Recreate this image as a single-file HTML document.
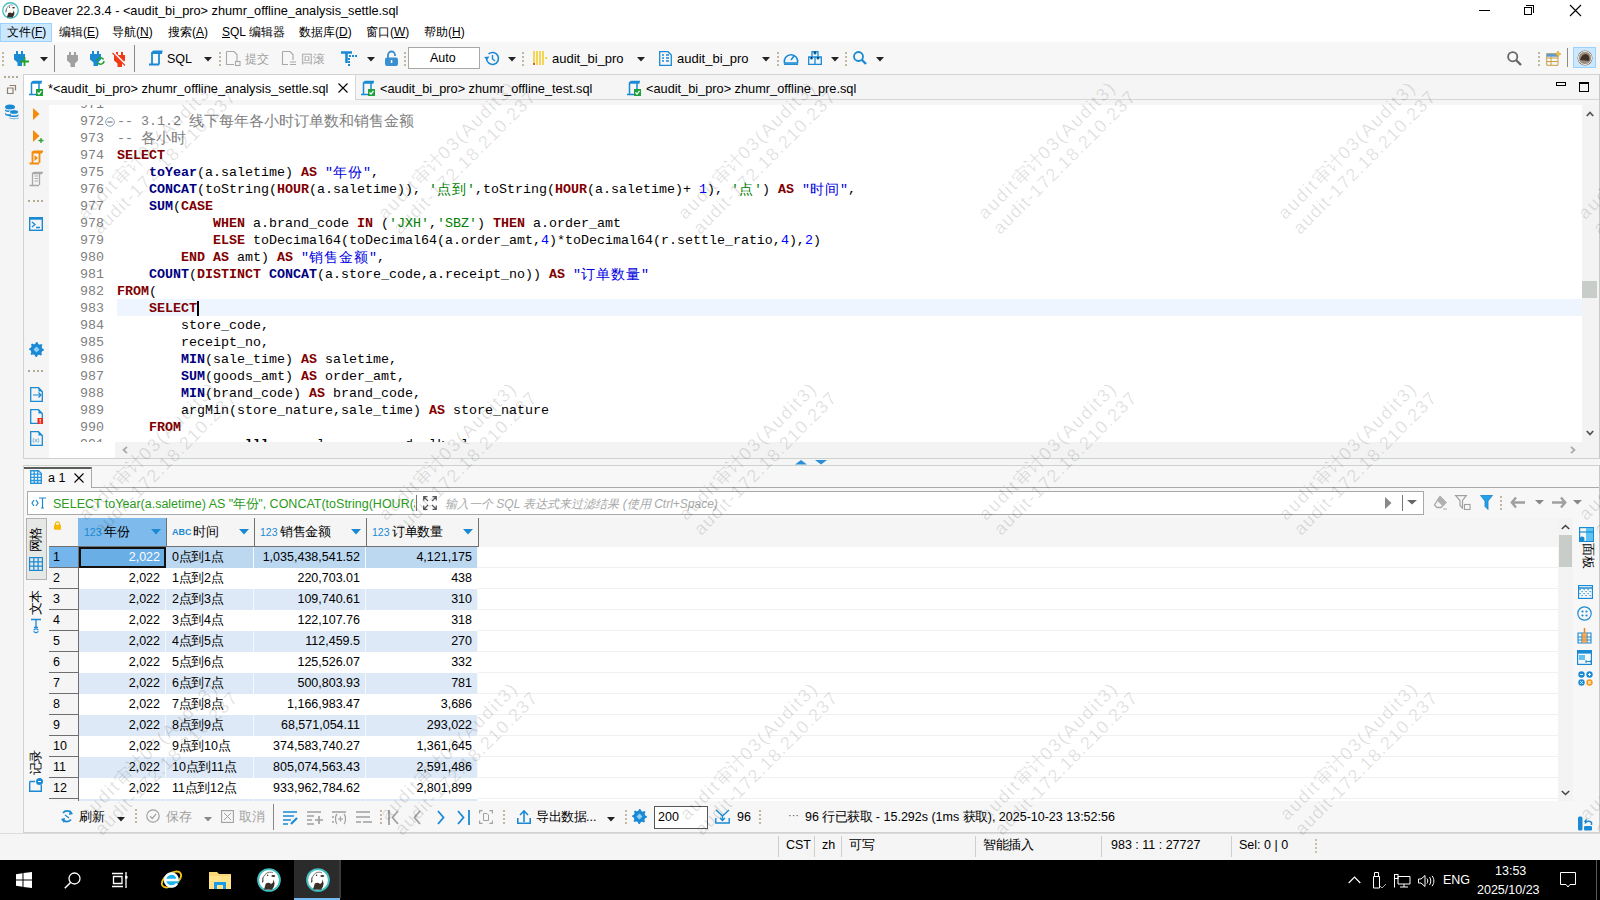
<!DOCTYPE html>
<html><head><meta charset="utf-8"><style>
*{margin:0;padding:0;box-sizing:border-box}
html,body{width:1600px;height:900px;overflow:hidden;background:#f5f5f5;font-family:"Liberation Sans",sans-serif;font-size:12px;color:#000}
.a{position:absolute}
.t{position:absolute;white-space:pre;line-height:1}
svg{position:absolute;overflow:visible}
.code{position:absolute;left:0;font-family:"Liberation Mono",monospace;font-size:13.333px;line-height:17px;white-space:pre}
.kw{color:#7f0000;font-weight:bold}
.fn{color:#00007f;font-weight:bold}
.st{color:#008000}
.id{color:#0000e0}
.nu{color:#0000ff}
.cm{color:#808080}
.ln{color:#808080}
.cj{display:inline-block;width:15px;font-family:"Liberation Sans",sans-serif;font-size:14px;font-weight:normal;text-align:left;line-height:17px;vertical-align:top}
.cm .cj{width:15px;font-size:14.5px}
.dots{position:absolute;width:2px;border-left:2px dotted #c8bfa8}
.sep{position:absolute;width:1px;background:#a6a6a6}
.dd{position:absolute;width:0;height:0;border-left:4px solid transparent;border-right:4px solid transparent;border-top:4px solid #1e1e1e}
.cw{display:inline-block;width:1em;text-align:center}
</style></head><body>

<div class="a" style="left:0;top:0;width:1600px;height:23px;background:#fff"></div>
<svg style="left:2px;top:2px" width="17" height="17" viewBox="0 0 24 24"><circle cx="12" cy="12" r="10.9" fill="#fff" stroke="#42bfc1" stroke-width="1.9"/><path d="M7 21.5L8.8 15.5Q12 13.8 14 16L15.8 14.8L16.6 11.5L17.6 15.5L17 18.5L15 21.8Z" fill="#3a2e28"/><ellipse cx="16.3" cy="8" rx="2" ry="1.1" fill="#3a2e28"/><circle cx="10.6" cy="7.3" r="0.8" fill="#3a2e28"/><path d="M5.5 11.5Q7.5 5 12 4.2Q14.5 4 16 4.8" stroke="#666" stroke-width="0.9" fill="none"/><path d="M6 8.5L4.8 15L6.5 13.5Z" fill="#3a2e28"/></svg>
<div class="t" style="left:23px;top:5px;font-size:12.75px">DBeaver 22.3.4 - &lt;audit_bi_pro&gt; zhumr_offline_analysis_settle.sql</div>
<div class="a" style="left:1479px;top:10px;width:11px;height:1px;background:#000"></div>
<div class="a" style="left:1526px;top:5px;width:8px;height:8px;border:1px solid #000;border-left:none;border-bottom:none"></div>
<div class="a" style="left:1524px;top:7px;width:8px;height:8px;border:1px solid #000;background:#fff"></div>
<svg style="left:1569px;top:4px" width="13" height="13"><path d="M1 1L12 12M12 1L1 12" stroke="#000" stroke-width="1.1"/></svg>

<div class="a" style="left:0;top:23px;width:1600px;height:19px;background:#fff"></div>
<div class="a" style="left:0;top:23px;width:52px;height:19px;background:#cce8ff;border:1px solid #99d1ff"></div>
<div class="t" style="left:7px;top:26px"><span class="cw">文</span><span class="cw">件</span>(<u>F</u>)</div><div class="t" style="left:59px;top:26px"><span class="cw">编</span><span class="cw">辑</span>(<u>E</u>)</div><div class="t" style="left:112px;top:26px"><span class="cw">导</span><span class="cw">航</span>(<u>N</u>)</div><div class="t" style="left:168px;top:26px"><span class="cw">搜</span><span class="cw">索</span>(<u>A</u>)</div><div class="t" style="left:222px;top:26px"><u>S</u>QL <span class="cw">编</span><span class="cw">辑</span><span class="cw">器</span></div><div class="t" style="left:299px;top:26px"><span class="cw">数</span><span class="cw">据</span><span class="cw">库</span>(<u>D</u>)</div><div class="t" style="left:366px;top:26px"><span class="cw">窗</span><span class="cw">口</span>(<u>W</u>)</div><div class="t" style="left:424px;top:26px"><span class="cw">帮</span><span class="cw">助</span>(<u>H</u>)</div>
<div class="a" style="left:0;top:42px;width:1600px;height:32px;background:#f7f7f7"></div>
<div class="a" style="left:2px;top:52px;width:2px;height:2px;background:#c2b89f"></div><div class="a" style="left:2px;top:56px;width:2px;height:2px;background:#c2b89f"></div><div class="a" style="left:2px;top:60px;width:2px;height:2px;background:#c2b89f"></div><div class="a" style="left:2px;top:64px;width:2px;height:2px;background:#c2b89f"></div>
<svg style="left:14px;top:51px" width="12" height="15"><path d="M2 0H4V3H7V0H9V3H11V8.5L8 11.5V15H3.5V11.5L0 8.5V3H2Z" fill="#1a8ad4"/></svg>
<svg style="left:20px;top:57px" width="9" height="9"><path d="M4.5 0V9M0 4.5H9" stroke="#1fa030" stroke-width="1.8"/></svg>
<svg style="left:40px;top:57px" width="8" height="5"><path d="M0 0H8L4 4.5Z" fill="#222"/></svg>
<div class="sep" style="left:54px;top:45px;height:27px;background:#8a8a8a"></div>
<svg style="left:67px;top:52px" width="12" height="15"><path d="M2 0H4V3H7V0H9V3H11V8.5L8 11.5V15H3.5V11.5L0 8.5V3H2Z" fill="#a0a0a0"/></svg>
<svg style="left:90px;top:51px" width="12" height="15"><path d="M2 0H4V3H7V0H9V3H11V8.5L8 11.5V15H3.5V11.5L0 8.5V3H2Z" fill="#1a8ad4"/></svg>
<svg style="left:96px;top:57px" width="9" height="8"><path d="M1 4A3.5 3.5 0 0 1 7.5 2.5M8 4A3.5 3.5 0 0 1 1.5 5.5" stroke="#1fa030" stroke-width="1.5" fill="none"/></svg>
<svg style="left:114px;top:52px" width="12" height="15"><path d="M2 0H4V3H7V0H9V3H11V8.5L8 11.5V15H3.5V11.5L0 8.5V3H2Z" fill="#f03a17"/></svg>
<svg style="left:112px;top:51px" width="15" height="15"><path d="M1 1L14 14" stroke="#f7f7f7" stroke-width="2.2"/><path d="M0.5 2L13 14.5" stroke="#f03a17" stroke-width="1.1"/></svg>
<div class="sep" style="left:134px;top:45px;height:27px;background:#8a8a8a"></div>
<svg style="left:148px;top:51px" width="15" height="15"><path d="M4 13V2H14M4 2C5 1 5 0.5 6 0.5H14.5M1 13.5H11M11 13.5V2" stroke="#1a8ad4" stroke-width="1.8" fill="none"/></svg>
<div class="t" style="left:167px;top:53px;font-size:12.5px">SQL</div>
<svg style="left:204px;top:57px" width="8" height="5"><path d="M0 0H8L4 4.5Z" fill="#222"/></svg>
<div class="a" style="left:219px;top:52px;width:2px;height:2px;background:#c2b89f"></div><div class="a" style="left:219px;top:56px;width:2px;height:2px;background:#c2b89f"></div><div class="a" style="left:219px;top:60px;width:2px;height:2px;background:#c2b89f"></div><div class="a" style="left:219px;top:64px;width:2px;height:2px;background:#c2b89f"></div>
<svg style="left:226px;top:51px" width="15" height="15"><path d="M0.5 0.5H8L11 3.5V10M0.5 0.5V13.5H8" stroke="#a8a8a8" stroke-width="1.1" fill="none"/><rect x="9.5" y="10.5" width="4.5" height="4" fill="none" stroke="#a8a8a8" stroke-width="1.1"/></svg>
<div class="t" style="left:245px;top:53px;color:#a0a0a0"><span class="cw">提</span><span class="cw">交</span></div>
<svg style="left:282px;top:51px" width="15" height="15"><path d="M0.5 0.5H8L11 3.5V9M0.5 0.5V13.5H6M8 11H14M8 13.5H14" stroke="#a8a8a8" stroke-width="1.1" fill="none"/></svg>
<div class="t" style="left:301px;top:53px;color:#a0a0a0"><span class="cw">回</span><span class="cw">滚</span></div>
<svg style="left:341px;top:51px" width="16" height="16"><path d="M0 1.5H11M5.5 1.5V12" stroke="#1a8ad4" stroke-width="2.6"/><rect x="8" y="4" width="2" height="2" fill="#1a8ad4"/><rect x="11" y="4" width="2" height="2" fill="#1a8ad4"/><rect x="14" y="4" width="2" height="2" fill="#1a8ad4"/><rect x="7" y="7" width="2" height="2" fill="#1a8ad4"/><rect x="7" y="10" width="2" height="2" fill="#1a8ad4"/><rect x="7" y="13" width="2" height="2" fill="#1a8ad4"/></svg>
<svg style="left:367px;top:57px" width="8" height="5"><path d="M0 0H8L4 4.5Z" fill="#222"/></svg>
<svg style="left:385px;top:51px" width="13" height="15"><path d="M3 7V4A3.5 3.5 0 0 1 10 4V5" stroke="#3a8fd0" stroke-width="1.8" fill="none"/><rect x="0" y="6.5" width="13" height="8.5" rx="2" fill="#3a8fd0"/><rect x="5.8" y="9" width="1.5" height="3" fill="#fff"/></svg>
<div class="a" style="left:404px;top:52px;width:2px;height:2px;background:#c2b89f"></div><div class="a" style="left:404px;top:56px;width:2px;height:2px;background:#c2b89f"></div><div class="a" style="left:404px;top:60px;width:2px;height:2px;background:#c2b89f"></div><div class="a" style="left:404px;top:64px;width:2px;height:2px;background:#c2b89f"></div>
<div class="a" style="left:408px;top:47px;width:72px;height:22px;background:#fff;border:1px solid #a8a8a8"></div>
<div class="t" style="left:430px;top:52px;font-size:12.5px">Auto</div>
<svg style="left:484px;top:51px" width="16" height="15"><path d="M2.5 7.5A6 6 0 1 0 4.5 3" stroke="#1a8ad4" stroke-width="1.6" fill="none"/><path d="M0 6L3 9L5.5 5.5Z" fill="#1a8ad4"/><path d="M8.5 4V8L11 10" stroke="#1a8ad4" stroke-width="1.4" fill="none"/></svg>
<svg style="left:508px;top:57px" width="8" height="5"><path d="M0 0H8L4 4.5Z" fill="#222"/></svg>
<div class="a" style="left:522px;top:52px;width:2px;height:2px;background:#c2b89f"></div><div class="a" style="left:522px;top:56px;width:2px;height:2px;background:#c2b89f"></div><div class="a" style="left:522px;top:60px;width:2px;height:2px;background:#c2b89f"></div><div class="a" style="left:522px;top:64px;width:2px;height:2px;background:#c2b89f"></div>
<svg style="left:533px;top:51px" width="15" height="15"><path d="M1 0V14M4 0V14M7 0V14M10 0V14" stroke="#f4c400" stroke-width="1.3"/><rect x="0.3" y="12" width="1.5" height="2" fill="#e03030"/><rect x="12.5" y="6" width="1.5" height="2" fill="#f4c400"/></svg>
<div class="t" style="left:552px;top:52px;font-size:13px">audit_bi_pro</div>
<svg style="left:637px;top:57px" width="8" height="5"><path d="M0 0H8L4 4.5Z" fill="#222"/></svg>
<svg style="left:659px;top:51px" width="13" height="15"><path d="M0.7 0.7H9L12.3 4V14.3H0.7Z" stroke="#1a8ad4" stroke-width="1.3" fill="none"/><path d="M3 4H5M3 7H5M3 10H5M7 4H10M7 7H10M7 10H10" stroke="#1a8ad4" stroke-width="1.5"/></svg>
<div class="t" style="left:677px;top:52px;font-size:13px">audit_bi_pro</div>
<svg style="left:762px;top:57px" width="8" height="5"><path d="M0 0H8L4 4.5Z" fill="#222"/></svg>
<div class="a" style="left:777px;top:52px;width:2px;height:2px;background:#c2b89f"></div><div class="a" style="left:777px;top:56px;width:2px;height:2px;background:#c2b89f"></div><div class="a" style="left:777px;top:60px;width:2px;height:2px;background:#c2b89f"></div><div class="a" style="left:777px;top:64px;width:2px;height:2px;background:#c2b89f"></div>
<svg style="left:783px;top:51px" width="16" height="14"><path d="M1.5 12A6.7 6.7 0 1 1 14.5 12Z" stroke="#1a8ad4" stroke-width="1.6" fill="none"/><path d="M1 13.3H15" stroke="#1a8ad4" stroke-width="1.3"/><path d="M8 9L11 5" stroke="#1a8ad4" stroke-width="1.6"/></svg>
<svg style="left:808px;top:51px" width="14" height="14"><path d="M4 0.7H10V6H4ZM0.7 6H7V13.3H0.7ZM7 6H13.3V13.3H7Z" stroke="#1a8ad4" stroke-width="1.3" fill="none"/><path d="M6 0.7V3H8V0.7M2.5 6V8H4.5V6M9 6V8H11V6" stroke="#1a8ad4" stroke-width="1"/></svg>
<svg style="left:831px;top:57px" width="8" height="5"><path d="M0 0H8L4 4.5Z" fill="#222"/></svg>
<div class="a" style="left:845px;top:52px;width:2px;height:2px;background:#c2b89f"></div><div class="a" style="left:845px;top:56px;width:2px;height:2px;background:#c2b89f"></div><div class="a" style="left:845px;top:60px;width:2px;height:2px;background:#c2b89f"></div><div class="a" style="left:845px;top:64px;width:2px;height:2px;background:#c2b89f"></div>
<svg style="left:853px;top:51px" width="14" height="14"><circle cx="5.5" cy="5.5" r="4.5" stroke="#1a8ad4" stroke-width="1.8" fill="none"/><path d="M8.5 8.5L13 13" stroke="#1a8ad4" stroke-width="2.4"/></svg>
<svg style="left:876px;top:57px" width="8" height="5"><path d="M0 0H8L4 4.5Z" fill="#222"/></svg>
<svg style="left:1507px;top:51px" width="15" height="15"><circle cx="5.7" cy="5.7" r="4.6" stroke="#666" stroke-width="1.8" fill="none"/><path d="M9 9L14 14" stroke="#666" stroke-width="2.4"/></svg>
<div class="a" style="left:1538px;top:52px;width:2px;height:2px;background:#c2b89f"></div><div class="a" style="left:1538px;top:56px;width:2px;height:2px;background:#c2b89f"></div><div class="a" style="left:1538px;top:60px;width:2px;height:2px;background:#c2b89f"></div><div class="a" style="left:1538px;top:64px;width:2px;height:2px;background:#c2b89f"></div>
<svg style="left:1546px;top:51px" width="16" height="15"><path d="M0.7 2.7H12V14.3H0.7ZM0.7 7H12M0.7 10.5H12M5 2.7V14.3" stroke="#c9a040" stroke-width="1" fill="none"/><rect x="0.7" y="2.7" width="11" height="3" fill="#5b9bd5"/><path d="M12 0L13 2L15 3L13 4L12 6L11 4L9 3L11 2Z" fill="#f0c040" stroke="#d09020" stroke-width="0.5"/></svg>
<div class="sep" style="left:1567px;top:48px;height:19px;background:#8a8a8a"></div>
<div class="a" style="left:1573px;top:47px;width:23px;height:21px;background:#cce8ff;border:1px solid #99d1ff"></div>
<svg style="left:1577px;top:50px" width="16" height="16"><circle cx="8" cy="8" r="7.5" fill="#7a6a5a"/><circle cx="8" cy="8" r="6.5" fill="#9a8a7a" stroke="#eee" stroke-width="1"/><path d="M3 10C4 6 6 4 9 4C12 5 13 8 12 11Z" fill="#3d3129"/></svg>

<!-- left trim -->
<div class="a" style="left:4px;top:76px;width:14px;height:2px;border-top:2px dotted #b5ab95"></div>
<svg style="left:7px;top:85px" width="9" height="9"><path d="M2.5 0.5H8.5V5.5M0.5 3H6V8.5H0.5Z" stroke="#8a7f70" stroke-width="1.2" fill="none"/></svg>
<svg style="left:4px;top:104px" width="15" height="15"><ellipse cx="6" cy="3" rx="5" ry="2.5" fill="#1a8ad4"/><path d="M1 5C1 7 11 7 11 5V6.5C11 8.5 1 8.5 1 6.5ZM1 8.5C1 10.5 6 10.5 7 10V12C6 12.5 1 12 1 10Z" fill="#1a8ad4"/><ellipse cx="10" cy="8" rx="4.5" ry="2.3" fill="#1a8ad4" stroke="#fff" stroke-width="0.8"/><path d="M5.5 10C5.5 12 14.5 12 14.5 10V11.5C14.5 13.5 5.5 13.5 5.5 11.5ZM5.5 13C5.5 15 14.5 15 14.5 13V14C14.5 15.5 5.5 15.5 5.5 14Z" fill="#1a8ad4"/></svg>
<!-- panel -->
<div class="a" style="left:23px;top:74px;width:1577px;height:385px;background:#f5f5f5;border:1px solid #d2d2d2;border-right:1px solid #c8c8c8"></div>
<div class="a" style="left:24px;top:75px;width:1575px;height:25px;background:#f5f5f5;border-bottom:1px solid #d6d6d6"></div>
<div class="a" style="left:24px;top:75px;width:332px;height:25px;background:#fff;border-right:1px solid #d6d6d6"></div>
<svg style="left:29px;top:81px" width="16" height="16"><path d="M2.5 13V2H12.5M2.5 2C3.5 1 3.5 0.5 4.5 0.5H13M0 13.5H8M10 1V8" stroke="#1a8ad4" stroke-width="1.5" fill="none"/><rect x="7" y="8" width="7" height="7" fill="#1ea03c"/><path d="M8.5 11.5L10 13L12.5 9.8" stroke="#fff" stroke-width="1.2" fill="none"/></svg>
<div class="t" style="left:48px;top:83px;font-size:12.75px">*&lt;audit_bi_pro&gt; zhumr_offline_analysis_settle.sql</div>
<svg style="left:338px;top:83px" width="10" height="10"><path d="M0.5 0.5L9.5 9.5M9.5 0.5L0.5 9.5" stroke="#000" stroke-width="1.1"/></svg>
<svg style="left:361px;top:81px" width="16" height="16"><path d="M2.5 13V2H12.5M2.5 2C3.5 1 3.5 0.5 4.5 0.5H13M0 13.5H8M10 1V8" stroke="#1a8ad4" stroke-width="1.5" fill="none"/><rect x="7" y="8" width="7" height="7" fill="#1ea03c"/><path d="M8.5 11.5L10 13L12.5 9.8" stroke="#fff" stroke-width="1.2" fill="none"/></svg>
<div class="t" style="left:380px;top:83px;font-size:12.75px">&lt;audit_bi_pro&gt; zhumr_offline_test.sql</div>
<svg style="left:627px;top:81px" width="16" height="16"><path d="M2.5 13V2H12.5M2.5 2C3.5 1 3.5 0.5 4.5 0.5H13M0 13.5H8M10 1V8" stroke="#1a8ad4" stroke-width="1.5" fill="none"/><rect x="7" y="8" width="7" height="7" fill="#1ea03c"/><path d="M8.5 11.5L10 13L12.5 9.8" stroke="#fff" stroke-width="1.2" fill="none"/></svg>
<div class="t" style="left:646px;top:83px;font-size:12.75px">&lt;audit_bi_pro&gt; zhumr_offline_pre.sql</div>
<div class="a" style="left:1556px;top:82px;width:10px;height:4px;border:1.5px solid #000"></div>
<div class="a" style="left:1579px;top:82px;width:10px;height:10px;border:1.5px solid #000;border-top:2.5px solid #000"></div>
<!-- ruler icons -->
<svg style="left:33px;top:108px" width="7" height="12"><path d="M0 0L6.5 6L0 12Z" fill="#f58a0b"/></svg>
<svg style="left:33px;top:130px" width="11" height="13"><path d="M0 0L6.5 6L0 12Z" fill="#f58a0b"/><path d="M8 8V13M5.5 10.5H10.5" stroke="#2a9d3a" stroke-width="1.3"/></svg>
<svg style="left:29px;top:151px" width="15" height="14"><path d="M3.5 12V1.5H13M3.5 1.5C4.5 0.5 4.5 0.5 5.5 0.5H14M0.5 12.5H10M10.5 1V12" stroke="#f58a0b" stroke-width="1.8" fill="none"/><path d="M5.5 4L9 7L5.5 10Z" fill="#f58a0b"/></svg>
<svg style="left:29px;top:172px" width="15" height="15"><path d="M3.5 13V1.5H13M3.5 1.5C4.5 0.5 4.5 0.5 5.5 0.5H14M0.5 13.5H10M10.5 1V13" stroke="#a8a8a8" stroke-width="1.3" fill="none"/><path d="M5.5 4H9M5.5 6.5H9M5.5 9H9" stroke="#a8a8a8" stroke-width="1"/></svg>
<div class="a" style="left:28px;top:200px;width:15px;height:2px;border-top:2px dotted #b5ab95"></div>
<svg style="left:29px;top:217px" width="14" height="14"><rect x="0.7" y="0.7" width="12.6" height="12.6" fill="none" stroke="#1a8ad4" stroke-width="1.4"/><rect x="0.7" y="0.7" width="12.6" height="2" fill="#1a8ad4"/><path d="M3 5L6 7.5L3 10M7 10.5H11" stroke="#1a8ad4" stroke-width="1.3" fill="none"/></svg>
<svg style="left:29px;top:342px" width="15" height="15"><path d="M7.14 0.11L8.59 0.18L9.39 2.23L10.38 2.70L12.47 2.02L13.44 3.09L12.56 5.11L12.93 6.14L14.89 7.14L14.82 8.59L12.77 9.39L12.30 10.38L12.98 12.47L11.91 13.44L9.89 12.56L8.86 12.93L7.86 14.89L6.41 14.82L5.61 12.77L4.62 12.30L2.53 12.98L1.56 11.91L2.44 9.89L2.07 8.86L0.11 7.86L0.18 6.41L2.23 5.61L2.70 4.62L2.02 2.53L3.09 1.56L5.11 2.44L6.14 2.07Z" fill="#1a8ad4"/><circle cx="7.5" cy="7.5" r="5.6" fill="#1a8ad4"/><path d="M7.5 4.5L10.5 7.5L7.5 10.5L4.5 7.5Z" fill="#8fd0f5"/></svg>
<div class="a" style="left:28px;top:370px;width:15px;height:2px;border-top:2px dotted #b5ab95"></div>
<svg style="left:30px;top:387px" width="13" height="15"><path d="M0.7 0.7H8.5L12.3 4.5V14.3H0.7Z" stroke="#1a8ad4" stroke-width="1.3" fill="none"/><path d="M8.5 0.7V4.5H12.3" fill="#1a8ad4"/><path d="M3 8H11M8.5 5.5L11 8L8.5 10.5" stroke="#1a8ad4" stroke-width="1.2" fill="none"/></svg>
<svg style="left:30px;top:409px" width="13" height="15"><path d="M0.7 0.7H8.5L12.3 4.5V14.3H0.7Z" stroke="#1a8ad4" stroke-width="1.3" fill="none"/><path d="M8.5 0.7V4.5H12.3" fill="#1a8ad4"/><rect x="7.5" y="9" width="5.5" height="6" fill="#f02a1a"/><path d="M10.2 10V12.5M10.2 13.3V14.2" stroke="#fff" stroke-width="1.1"/></svg>
<svg style="left:30px;top:431px" width="13" height="15"><path d="M0.7 0.7H8.5L12.3 4.5V14.3H0.7Z" stroke="#1a8ad4" stroke-width="1.3" fill="none"/><path d="M8.5 0.7V4.5H12.3" fill="#1a8ad4"/><text x="2.3" y="11" font-size="6" fill="#1a8ad4" font-family="Liberation Sans">(x)</text></svg>
<!-- text area -->
<div class="a" style="left:49px;top:105px;width:1533px;height:337px;background:#fff;overflow:hidden">
  <div class="a" style="left:68px;top:194px;width:1465px;height:17px;background:#eef5fe"></div>
  <div class="a" style="left:148px;top:196px;width:2px;height:15px;background:#000"></div>
  <div class="code ln" style="left:31px;top:-9px">971
972
973
974
975
976
977
978
979
980
981
982
983
984
985
986
987
988
989
990
991</div><div class="code" style="left:68px;top:-9px">
<span class="cm">-- 3.1.2 <span class="cj">线</span><span class="cj">下</span><span class="cj">每</span><span class="cj">年</span><span class="cj">各</span><span class="cj">小</span><span class="cj">时</span><span class="cj">订</span><span class="cj">单</span><span class="cj">数</span><span class="cj">和</span><span class="cj">销</span><span class="cj">售</span><span class="cj">金</span><span class="cj">额</span></span>
<span class="cm">-- <span class="cj">各</span><span class="cj">小</span><span class="cj">时</span></span>
<span class="kw">SELECT</span>
    <span class="fn">toYear</span>(a.saletime) <span class="kw">AS</span> <span class="id">"<span class="cj">年</span><span class="cj">份</span>"</span>,
    <span class="fn">CONCAT</span>(toString(<span class="kw">HOUR</span>(a.saletime)), <span class="st">'<span class="cj">点</span><span class="cj">到</span>'</span>,toString(<span class="kw">HOUR</span>(a.saletime)+ <span class="nu">1</span>), <span class="st">'<span class="cj">点</span>'</span>) <span class="kw">AS</span> <span class="id">"<span class="cj">时</span><span class="cj">间</span>"</span>,
    <span class="fn">SUM</span>(<span class="kw">CASE</span>
            <span class="kw">WHEN</span> a.brand_code <span class="kw">IN</span> (<span class="st">'JXH'</span>,<span class="st">'SBZ'</span>) <span class="kw">THEN</span> a.order_amt
            <span class="kw">ELSE</span> toDecimal64(toDecimal64(a.order_amt,<span class="nu">4</span>)*toDecimal64(r.settle_ratio,<span class="nu">4</span>),<span class="nu">2</span>)
        <span class="kw">END</span> <span class="kw">AS</span> amt) <span class="kw">AS</span> <span class="id">"<span class="cj">销</span><span class="cj">售</span><span class="cj">金</span><span class="cj">额</span>"</span>,
    <span class="fn">COUNT</span>(<span class="kw">DISTINCT</span> <span class="fn">CONCAT</span>(a.store_code,a.receipt_no)) <span class="kw">AS</span> <span class="id">"<span class="cj">订</span><span class="cj">单</span><span class="cj">数</span><span class="cj">量</span>"</span>
<span class="kw">FROM</span>(
    <span class="kw">SELECT</span>
        store_code,
        receipt_no,
        <span class="fn">MIN</span>(sale_time) <span class="kw">AS</span> saletime,
        <span class="fn">SUM</span>(goods_amt) <span class="kw">AS</span> order_amt,
        <span class="fn">MIN</span>(brand_code) <span class="kw">AS</span> brand_code,
        argMin(store_nature,sale_time) <span class="kw">AS</span> store_nature
    <span class="kw">FROM</span>
                <b>lll</b>      l          d  lk  l</div>
  <svg style="left:56px;top:12px" width="10" height="10"><circle cx="5" cy="5" r="4.3" fill="#fff" stroke="#8aa0b8" stroke-width="1"/><path d="M2.5 5H7.5" stroke="#6a7f98" stroke-width="1.2"/></svg>
</div>
<!-- vscroll -->
<div class="a" style="left:1582px;top:105px;width:17px;height:353px;background:#f3f3f3"></div>
<div class="a" style="left:1582px;top:281px;width:15px;height:17px;background:#c9cdc9"></div>
<svg style="left:1586px;top:111px" width="8" height="6"><path d="M0.8 5L4 1.5L7.2 5" stroke="#555" stroke-width="1.8" fill="none"/></svg>
<svg style="left:1586px;top:430px" width="8" height="6"><path d="M0.8 1L4 4.5L7.2 1" stroke="#555" stroke-width="1.8" fill="none"/></svg>
<div class="a" style="left:49px;top:442px;width:66px;height:16px;background:#fff"></div>
<!-- hscroll -->
<div class="a" style="left:115px;top:442px;width:1467px;height:16px;background:#f3f3f3"></div>
<svg style="left:122px;top:446px" width="6" height="8"><path d="M5 0.8L1.5 4L5 7.2" stroke="#aaa" stroke-width="1.8" fill="none"/></svg>
<svg style="left:1570px;top:446px" width="6" height="8"><path d="M1 0.8L4.5 4L1 7.2" stroke="#aaa" stroke-width="1.8" fill="none"/></svg>
<div class="a" style="left:23px;top:458px;width:1577px;height:1px;background:#cdd2cd"></div>

<!-- splitter -->
<div class="a" style="left:23px;top:465px;width:1577px;height:1px;background:#cdd2cd"></div>
<svg style="left:795px;top:460px" width="12" height="5"><path d="M0 4.5H12L6 0Z" fill="#2a8fd8"/></svg>
<svg style="left:815px;top:460px" width="12" height="5"><path d="M0 0H12L6 4.5Z" fill="#2a8fd8"/></svg>
<div class="a" style="left:23px;top:466px;width:1577px;height:367px;background:#f7f7f7;border-left:1px solid #d2d2d2;border-right:1px solid #c8c8c8;border-bottom:1px solid #d2d2d2"></div>
<!-- tab -->
<div class="a" style="left:24px;top:487px;width:1575px;height:1px;background:#a9a9a9"></div>
<div class="a" style="left:24px;top:467px;width:68px;height:21px;background:#f7f7f7;border-right:1px solid #a9a9a9;border-top:2px solid #5a5d5a"></div>
<svg style="left:30px;top:470px" width="12" height="14"><path d="M0.7 0.7H8.5L11.3 3.5V13.3H0.7Z" fill="#fff" stroke="#2a96dc" stroke-width="1.4"/><path d="M0.7 4.2H11.3M0.7 7.4H11.3M0.7 10.5H11.3M4.2 0.7V13.3M7.6 0.7V13.3" stroke="#2a96dc" stroke-width="1.3"/></svg>
<div class="t" style="left:48px;top:472px;font-size:12.5px">a 1</div>
<svg style="left:74px;top:473px" width="10" height="10"><path d="M0.5 0.5L9.5 9.5M9.5 0.5L0.5 9.5" stroke="#000" stroke-width="1.1"/></svg>
<!-- filter -->
<div class="a" style="left:27px;top:491px;width:1397px;height:24px;background:#fff;border:1px solid #a9a9a9"></div>
<svg style="left:31px;top:497px" width="16" height="12"><path d="M3 3L1 6L3 9M5 3L7 6L5 9" stroke="#1a8ad4" stroke-width="1.2" fill="none"/><path d="M8 1H15M11.5 1V11M10 11H13" stroke="#1a8ad4" stroke-width="1.2" fill="none"/></svg>
<div class="t" style="left:53px;top:498px;font-size:12.5px;color:#2c9a1c;width:362px;overflow:hidden">SELECT toYear(a.saletime) AS "<span class="cw">年</span><span class="cw">份</span>", CONCAT(toString(HOUR(a.saletime)), '<span class="cw">点</span><span class="cw">到</span>'</div>
<div class="a" style="left:416px;top:495px;width:1px;height:16px;background:#777"></div>
<svg style="left:423px;top:496px" width="14" height="14"><path d="M0.7 4.5V0.7H4.5M9.5 0.7H13.3V4.5M13.3 9.5V13.3H9.5M4.5 13.3H0.7V9.5M1 1L5 5M13 1L9 5M13 13L9 9M1 13L5 9" stroke="#555" stroke-width="1.2" fill="none"/></svg>
<div class="t" style="left:445px;top:498px;font-size:12px;color:#a8a8a8;font-style:italic"><span class="cw">输</span><span class="cw">入</span><span class="cw">一</span><span class="cw">个</span> SQL <span class="cw">表</span><span class="cw">达</span><span class="cw">式</span><span class="cw">来</span><span class="cw">过</span><span class="cw">滤</span><span class="cw">结</span><span class="cw">果</span> (<span class="cw">使</span><span class="cw">用</span> Ctrl+Space)</div>
<svg style="left:1385px;top:497px" width="7" height="12"><path d="M0 0L6.5 6L0 12Z" fill="#888"/></svg>
<div class="a" style="left:1402px;top:495px;width:1px;height:16px;background:#777"></div>
<svg style="left:1407px;top:500px" width="10" height="5"><path d="M0 0H10L5.0 4.5Z" fill="#666"/></svg>
<svg style="left:1433px;top:495px" width="15" height="15"><path d="M7 1.5L13 7.5L8 12.5H4L1.5 10Z" stroke="#a8a8a8" stroke-width="1.3" fill="none"/><path d="M7 1.5L13 7.5L9.5 11L3.5 5Z" fill="#b0b0b0"/><path d="M10 14H14" stroke="#a8a8a8" stroke-width="1"/></svg>
<svg style="left:1455px;top:495px" width="16" height="15"><path d="M0.7 0.7H11.3L7.5 5.5V13L5 10.5V5.5Z" stroke="#a0a0a0" stroke-width="1.2" fill="none"/><rect x="9.5" y="9.5" width="5.5" height="5" fill="none" stroke="#a0a0a0" stroke-width="1.1"/></svg>
<svg style="left:1480px;top:495px" width="13" height="15"><path d="M0.5 0.5H12.5L8 6V14.5L5 11.5V6Z" fill="#22a0e8" stroke="#1a80c8" stroke-width="0.8"/></svg>
<div class="a" style="left:1500px;top:496px;width:2px;height:2px;background:#c2b89f"></div><div class="a" style="left:1500px;top:500px;width:2px;height:2px;background:#c2b89f"></div><div class="a" style="left:1500px;top:504px;width:2px;height:2px;background:#c2b89f"></div><div class="a" style="left:1500px;top:508px;width:2px;height:2px;background:#c2b89f"></div>
<svg style="left:1511px;top:497px" width="15" height="11"><path d="M5 0.5L0.8 5.5L5 10.5M1 5.5H14" stroke="#a0a0a0" stroke-width="2.4" fill="none"/></svg>
<svg style="left:1535px;top:500px" width="9" height="5"><path d="M0 0H9L4.5 4.5Z" fill="#888"/></svg>
<svg style="left:1551px;top:497px" width="15" height="11"><path d="M10 0.5L14.2 5.5L10 10.5M14 5.5H1" stroke="#a0a0a0" stroke-width="2.4" fill="none"/></svg>
<svg style="left:1573px;top:500px" width="9" height="5"><path d="M0 0H9L4.5 4.5Z" fill="#888"/></svg>
<!-- vertical tabs -->
<div class="a" style="left:26px;top:518px;width:21px;height:62px;background:#e5e8e5;border:1px solid #b2b2b2"></div>
<div class="t" style="left:30px;top:552px;transform:rotate(-90deg);transform-origin:0 0;font-size:12.5px"><span class="cw">网</span><span class="cw">格</span></div>
<svg style="left:29px;top:557px" width="14" height="14"><rect x="0.6" y="0.6" width="12.8" height="12.8" fill="none" stroke="#1a8ad4" stroke-width="1.2"/><path d="M0.6 4.8H13.4M0.6 9.1H13.4M4.8 0.6V13.4M9.1 0.6V13.4" stroke="#1a8ad4" stroke-width="1.2"/></svg>
<div class="t" style="left:30px;top:615px;transform:rotate(-90deg);transform-origin:0 0;font-size:12.5px"><span class="cw">文</span><span class="cw">本</span></div>
<svg style="left:30px;top:618px" width="12" height="16"><path d="M1 1.5H11M6 1.5V9.5M4 9.5H8" stroke="#1a8ad4" stroke-width="1.3" fill="none"/><path d="M3.5 12L6 10.8L8.5 12M3.5 13.5L6 14.8L8.5 13.5" stroke="#1a8ad4" stroke-width="1.2" fill="none"/></svg>
<div class="t" style="left:30px;top:775px;transform:rotate(-90deg);transform-origin:0 0;font-size:12.5px"><span class="cw">记</span><span class="cw">录</span></div>
<svg style="left:29px;top:778px" width="15" height="14"><path d="M0.7 3.5V13.3H12.3V7M0.7 3.5H6" stroke="#1a8ad4" stroke-width="1.4" fill="none"/><circle cx="10.5" cy="3.5" r="3.5" fill="#1a8ad4"/><path d="M9 3.5H12" stroke="#fff" stroke-width="1"/></svg>
<div class="a" style="left:49px;top:518px;width:1509px;height:283px;background:#fff;overflow:hidden">
<div class="a" style="left:0;top:0;width:1509px;height:29px;background:#f5f5f5"></div>
<div class="a" style="left:429px;top:49px;width:1080px;height:1px;background:#f0f0f0"></div>
<div class="a" style="left:429px;top:70px;width:1080px;height:1px;background:#f0f0f0"></div>
<div class="a" style="left:429px;top:91px;width:1080px;height:1px;background:#f0f0f0"></div>
<div class="a" style="left:429px;top:112px;width:1080px;height:1px;background:#f0f0f0"></div>
<div class="a" style="left:429px;top:133px;width:1080px;height:1px;background:#f0f0f0"></div>
<div class="a" style="left:429px;top:154px;width:1080px;height:1px;background:#f0f0f0"></div>
<div class="a" style="left:429px;top:175px;width:1080px;height:1px;background:#f0f0f0"></div>
<div class="a" style="left:429px;top:196px;width:1080px;height:1px;background:#f0f0f0"></div>
<div class="a" style="left:429px;top:217px;width:1080px;height:1px;background:#f0f0f0"></div>
<div class="a" style="left:429px;top:238px;width:1080px;height:1px;background:#f0f0f0"></div>
<div class="a" style="left:429px;top:259px;width:1080px;height:1px;background:#f0f0f0"></div>
<div class="a" style="left:429px;top:280px;width:1080px;height:1px;background:#f0f0f0"></div>
<div class="a" style="left:429px;top:301px;width:1080px;height:1px;background:#f0f0f0"></div>
<div class="a" style="left:0;top:29px;width:29px;height:21px;background:#74b5eb;border-bottom:1px solid #6e6e6e"></div>
<div class="t" style="left:4px;top:33px;font-size:12.5px">1</div>
<div class="a" style="left:29px;top:29px;width:88px;height:21px;background:#bcd8f0;border-right:1px solid #f5f8fc"></div>
<div class="a" style="left:117px;top:29px;width:88px;height:21px;background:#bcd8f0;border-right:1px solid #f5f8fc"></div>
<div class="a" style="left:205px;top:29px;width:112px;height:21px;background:#bcd8f0;border-right:1px solid #f5f8fc"></div>
<div class="a" style="left:317px;top:29px;width:112px;height:21px;background:#bcd8f0;border-right:1px solid #f5f8fc"></div>
<div class="t" style="left:29px;width:82px;text-align:right;top:33px;font-size:12.5px;color:#fff">2,022</div>
<div class="t" style="left:123px;top:33px;font-size:12.5px">0<span class="cw">点</span><span class="cw">到</span>1<span class="cw">点</span></div>
<div class="t" style="left:205px;width:106px;text-align:right;top:33px;font-size:12.5px">1,035,438,541.52</div>
<div class="t" style="left:317px;width:106px;text-align:right;top:33px;font-size:12.5px">4,121,175</div>
<div class="a" style="left:0;top:50px;width:29px;height:21px;background:#f5f5f5;border-bottom:1px solid #6e6e6e"></div>
<div class="t" style="left:4px;top:54px;font-size:12.5px">2</div>
<div class="a" style="left:29px;top:50px;width:88px;height:21px;background:#ffffff;border-right:1px solid #ffffff"></div>
<div class="a" style="left:117px;top:50px;width:88px;height:21px;background:#ffffff;border-right:1px solid #ffffff"></div>
<div class="a" style="left:205px;top:50px;width:112px;height:21px;background:#ffffff;border-right:1px solid #ffffff"></div>
<div class="a" style="left:317px;top:50px;width:112px;height:21px;background:#ffffff;border-right:1px solid #ffffff"></div>
<div class="t" style="left:29px;width:82px;text-align:right;top:54px;font-size:12.5px;color:#000">2,022</div>
<div class="t" style="left:123px;top:54px;font-size:12.5px">1<span class="cw">点</span><span class="cw">到</span>2<span class="cw">点</span></div>
<div class="t" style="left:205px;width:106px;text-align:right;top:54px;font-size:12.5px">220,703.01</div>
<div class="t" style="left:317px;width:106px;text-align:right;top:54px;font-size:12.5px">438</div>
<div class="a" style="left:0;top:71px;width:29px;height:21px;background:#f5f5f5;border-bottom:1px solid #6e6e6e"></div>
<div class="t" style="left:4px;top:75px;font-size:12.5px">3</div>
<div class="a" style="left:29px;top:71px;width:88px;height:21px;background:#dde9f6;border-right:1px solid #f5f8fc"></div>
<div class="a" style="left:117px;top:71px;width:88px;height:21px;background:#dde9f6;border-right:1px solid #f5f8fc"></div>
<div class="a" style="left:205px;top:71px;width:112px;height:21px;background:#dde9f6;border-right:1px solid #f5f8fc"></div>
<div class="a" style="left:317px;top:71px;width:112px;height:21px;background:#dde9f6;border-right:1px solid #f5f8fc"></div>
<div class="t" style="left:29px;width:82px;text-align:right;top:75px;font-size:12.5px;color:#000">2,022</div>
<div class="t" style="left:123px;top:75px;font-size:12.5px">2<span class="cw">点</span><span class="cw">到</span>3<span class="cw">点</span></div>
<div class="t" style="left:205px;width:106px;text-align:right;top:75px;font-size:12.5px">109,740.61</div>
<div class="t" style="left:317px;width:106px;text-align:right;top:75px;font-size:12.5px">310</div>
<div class="a" style="left:0;top:92px;width:29px;height:21px;background:#f5f5f5;border-bottom:1px solid #6e6e6e"></div>
<div class="t" style="left:4px;top:96px;font-size:12.5px">4</div>
<div class="a" style="left:29px;top:92px;width:88px;height:21px;background:#ffffff;border-right:1px solid #ffffff"></div>
<div class="a" style="left:117px;top:92px;width:88px;height:21px;background:#ffffff;border-right:1px solid #ffffff"></div>
<div class="a" style="left:205px;top:92px;width:112px;height:21px;background:#ffffff;border-right:1px solid #ffffff"></div>
<div class="a" style="left:317px;top:92px;width:112px;height:21px;background:#ffffff;border-right:1px solid #ffffff"></div>
<div class="t" style="left:29px;width:82px;text-align:right;top:96px;font-size:12.5px;color:#000">2,022</div>
<div class="t" style="left:123px;top:96px;font-size:12.5px">3<span class="cw">点</span><span class="cw">到</span>4<span class="cw">点</span></div>
<div class="t" style="left:205px;width:106px;text-align:right;top:96px;font-size:12.5px">122,107.76</div>
<div class="t" style="left:317px;width:106px;text-align:right;top:96px;font-size:12.5px">318</div>
<div class="a" style="left:0;top:113px;width:29px;height:21px;background:#f5f5f5;border-bottom:1px solid #6e6e6e"></div>
<div class="t" style="left:4px;top:117px;font-size:12.5px">5</div>
<div class="a" style="left:29px;top:113px;width:88px;height:21px;background:#dde9f6;border-right:1px solid #f5f8fc"></div>
<div class="a" style="left:117px;top:113px;width:88px;height:21px;background:#dde9f6;border-right:1px solid #f5f8fc"></div>
<div class="a" style="left:205px;top:113px;width:112px;height:21px;background:#dde9f6;border-right:1px solid #f5f8fc"></div>
<div class="a" style="left:317px;top:113px;width:112px;height:21px;background:#dde9f6;border-right:1px solid #f5f8fc"></div>
<div class="t" style="left:29px;width:82px;text-align:right;top:117px;font-size:12.5px;color:#000">2,022</div>
<div class="t" style="left:123px;top:117px;font-size:12.5px">4<span class="cw">点</span><span class="cw">到</span>5<span class="cw">点</span></div>
<div class="t" style="left:205px;width:106px;text-align:right;top:117px;font-size:12.5px">112,459.5</div>
<div class="t" style="left:317px;width:106px;text-align:right;top:117px;font-size:12.5px">270</div>
<div class="a" style="left:0;top:134px;width:29px;height:21px;background:#f5f5f5;border-bottom:1px solid #6e6e6e"></div>
<div class="t" style="left:4px;top:138px;font-size:12.5px">6</div>
<div class="a" style="left:29px;top:134px;width:88px;height:21px;background:#ffffff;border-right:1px solid #ffffff"></div>
<div class="a" style="left:117px;top:134px;width:88px;height:21px;background:#ffffff;border-right:1px solid #ffffff"></div>
<div class="a" style="left:205px;top:134px;width:112px;height:21px;background:#ffffff;border-right:1px solid #ffffff"></div>
<div class="a" style="left:317px;top:134px;width:112px;height:21px;background:#ffffff;border-right:1px solid #ffffff"></div>
<div class="t" style="left:29px;width:82px;text-align:right;top:138px;font-size:12.5px;color:#000">2,022</div>
<div class="t" style="left:123px;top:138px;font-size:12.5px">5<span class="cw">点</span><span class="cw">到</span>6<span class="cw">点</span></div>
<div class="t" style="left:205px;width:106px;text-align:right;top:138px;font-size:12.5px">125,526.07</div>
<div class="t" style="left:317px;width:106px;text-align:right;top:138px;font-size:12.5px">332</div>
<div class="a" style="left:0;top:155px;width:29px;height:21px;background:#f5f5f5;border-bottom:1px solid #6e6e6e"></div>
<div class="t" style="left:4px;top:159px;font-size:12.5px">7</div>
<div class="a" style="left:29px;top:155px;width:88px;height:21px;background:#dde9f6;border-right:1px solid #f5f8fc"></div>
<div class="a" style="left:117px;top:155px;width:88px;height:21px;background:#dde9f6;border-right:1px solid #f5f8fc"></div>
<div class="a" style="left:205px;top:155px;width:112px;height:21px;background:#dde9f6;border-right:1px solid #f5f8fc"></div>
<div class="a" style="left:317px;top:155px;width:112px;height:21px;background:#dde9f6;border-right:1px solid #f5f8fc"></div>
<div class="t" style="left:29px;width:82px;text-align:right;top:159px;font-size:12.5px;color:#000">2,022</div>
<div class="t" style="left:123px;top:159px;font-size:12.5px">6<span class="cw">点</span><span class="cw">到</span>7<span class="cw">点</span></div>
<div class="t" style="left:205px;width:106px;text-align:right;top:159px;font-size:12.5px">500,803.93</div>
<div class="t" style="left:317px;width:106px;text-align:right;top:159px;font-size:12.5px">781</div>
<div class="a" style="left:0;top:176px;width:29px;height:21px;background:#f5f5f5;border-bottom:1px solid #6e6e6e"></div>
<div class="t" style="left:4px;top:180px;font-size:12.5px">8</div>
<div class="a" style="left:29px;top:176px;width:88px;height:21px;background:#ffffff;border-right:1px solid #ffffff"></div>
<div class="a" style="left:117px;top:176px;width:88px;height:21px;background:#ffffff;border-right:1px solid #ffffff"></div>
<div class="a" style="left:205px;top:176px;width:112px;height:21px;background:#ffffff;border-right:1px solid #ffffff"></div>
<div class="a" style="left:317px;top:176px;width:112px;height:21px;background:#ffffff;border-right:1px solid #ffffff"></div>
<div class="t" style="left:29px;width:82px;text-align:right;top:180px;font-size:12.5px;color:#000">2,022</div>
<div class="t" style="left:123px;top:180px;font-size:12.5px">7<span class="cw">点</span><span class="cw">到</span>8<span class="cw">点</span></div>
<div class="t" style="left:205px;width:106px;text-align:right;top:180px;font-size:12.5px">1,166,983.47</div>
<div class="t" style="left:317px;width:106px;text-align:right;top:180px;font-size:12.5px">3,686</div>
<div class="a" style="left:0;top:197px;width:29px;height:21px;background:#f5f5f5;border-bottom:1px solid #6e6e6e"></div>
<div class="t" style="left:4px;top:201px;font-size:12.5px">9</div>
<div class="a" style="left:29px;top:197px;width:88px;height:21px;background:#dde9f6;border-right:1px solid #f5f8fc"></div>
<div class="a" style="left:117px;top:197px;width:88px;height:21px;background:#dde9f6;border-right:1px solid #f5f8fc"></div>
<div class="a" style="left:205px;top:197px;width:112px;height:21px;background:#dde9f6;border-right:1px solid #f5f8fc"></div>
<div class="a" style="left:317px;top:197px;width:112px;height:21px;background:#dde9f6;border-right:1px solid #f5f8fc"></div>
<div class="t" style="left:29px;width:82px;text-align:right;top:201px;font-size:12.5px;color:#000">2,022</div>
<div class="t" style="left:123px;top:201px;font-size:12.5px">8<span class="cw">点</span><span class="cw">到</span>9<span class="cw">点</span></div>
<div class="t" style="left:205px;width:106px;text-align:right;top:201px;font-size:12.5px">68,571,054.11</div>
<div class="t" style="left:317px;width:106px;text-align:right;top:201px;font-size:12.5px">293,022</div>
<div class="a" style="left:0;top:218px;width:29px;height:21px;background:#f5f5f5;border-bottom:1px solid #6e6e6e"></div>
<div class="t" style="left:4px;top:222px;font-size:12.5px">10</div>
<div class="a" style="left:29px;top:218px;width:88px;height:21px;background:#ffffff;border-right:1px solid #ffffff"></div>
<div class="a" style="left:117px;top:218px;width:88px;height:21px;background:#ffffff;border-right:1px solid #ffffff"></div>
<div class="a" style="left:205px;top:218px;width:112px;height:21px;background:#ffffff;border-right:1px solid #ffffff"></div>
<div class="a" style="left:317px;top:218px;width:112px;height:21px;background:#ffffff;border-right:1px solid #ffffff"></div>
<div class="t" style="left:29px;width:82px;text-align:right;top:222px;font-size:12.5px;color:#000">2,022</div>
<div class="t" style="left:123px;top:222px;font-size:12.5px">9<span class="cw">点</span><span class="cw">到</span>10<span class="cw">点</span></div>
<div class="t" style="left:205px;width:106px;text-align:right;top:222px;font-size:12.5px">374,583,740.27</div>
<div class="t" style="left:317px;width:106px;text-align:right;top:222px;font-size:12.5px">1,361,645</div>
<div class="a" style="left:0;top:239px;width:29px;height:21px;background:#f5f5f5;border-bottom:1px solid #6e6e6e"></div>
<div class="t" style="left:4px;top:243px;font-size:12.5px">11</div>
<div class="a" style="left:29px;top:239px;width:88px;height:21px;background:#dde9f6;border-right:1px solid #f5f8fc"></div>
<div class="a" style="left:117px;top:239px;width:88px;height:21px;background:#dde9f6;border-right:1px solid #f5f8fc"></div>
<div class="a" style="left:205px;top:239px;width:112px;height:21px;background:#dde9f6;border-right:1px solid #f5f8fc"></div>
<div class="a" style="left:317px;top:239px;width:112px;height:21px;background:#dde9f6;border-right:1px solid #f5f8fc"></div>
<div class="t" style="left:29px;width:82px;text-align:right;top:243px;font-size:12.5px;color:#000">2,022</div>
<div class="t" style="left:123px;top:243px;font-size:12.5px">10<span class="cw">点</span><span class="cw">到</span>11<span class="cw">点</span></div>
<div class="t" style="left:205px;width:106px;text-align:right;top:243px;font-size:12.5px">805,074,563.43</div>
<div class="t" style="left:317px;width:106px;text-align:right;top:243px;font-size:12.5px">2,591,486</div>
<div class="a" style="left:0;top:260px;width:29px;height:21px;background:#f5f5f5;border-bottom:1px solid #6e6e6e"></div>
<div class="t" style="left:4px;top:264px;font-size:12.5px">12</div>
<div class="a" style="left:29px;top:260px;width:88px;height:21px;background:#ffffff;border-right:1px solid #ffffff"></div>
<div class="a" style="left:117px;top:260px;width:88px;height:21px;background:#ffffff;border-right:1px solid #ffffff"></div>
<div class="a" style="left:205px;top:260px;width:112px;height:21px;background:#ffffff;border-right:1px solid #ffffff"></div>
<div class="a" style="left:317px;top:260px;width:112px;height:21px;background:#ffffff;border-right:1px solid #ffffff"></div>
<div class="t" style="left:29px;width:82px;text-align:right;top:264px;font-size:12.5px;color:#000">2,022</div>
<div class="t" style="left:123px;top:264px;font-size:12.5px">11<span class="cw">点</span><span class="cw">到</span>12<span class="cw">点</span></div>
<div class="t" style="left:205px;width:106px;text-align:right;top:264px;font-size:12.5px">933,962,784.62</div>
<div class="t" style="left:317px;width:106px;text-align:right;top:264px;font-size:12.5px">2,801,899</div>
<div class="a" style="left:0;top:281px;width:29px;height:21px;background:#f5f5f5;border-bottom:1px solid #6e6e6e"></div>
<div class="t" style="left:4px;top:285px;font-size:12.5px">13</div>
<div class="a" style="left:29px;top:281px;width:88px;height:21px;background:#dde9f6;border-right:1px solid #f5f8fc"></div>
<div class="a" style="left:117px;top:281px;width:88px;height:21px;background:#dde9f6;border-right:1px solid #f5f8fc"></div>
<div class="a" style="left:205px;top:281px;width:112px;height:21px;background:#dde9f6;border-right:1px solid #f5f8fc"></div>
<div class="a" style="left:317px;top:281px;width:112px;height:21px;background:#dde9f6;border-right:1px solid #f5f8fc"></div>
<div class="t" style="left:29px;width:82px;text-align:right;top:285px;font-size:12.5px;color:#000">2,022</div>
<div class="t" style="left:123px;top:285px;font-size:12.5px">12<span class="cw">点</span><span class="cw">到</span>13<span class="cw">点</span></div>
<div class="t" style="left:205px;width:106px;text-align:right;top:285px;font-size:12.5px"></div>
<div class="t" style="left:317px;width:106px;text-align:right;top:285px;font-size:12.5px"></div>
<div class="a" style="left:30px;top:29px;width:87px;height:21px;border:2px solid #111;background:#6aaee6"></div>
<div class="t" style="left:29px;width:82px;text-align:right;top:33px;font-size:12.5px;color:#fff">2,022</div>
<div class="a" style="left:29px;top:29px;width:1px;height:260px;background:#6e6e6e"></div>
<div class="a" style="left:29px;top:0;width:88px;height:29px;background:#7ebbec"></div>
<div class="a" style="left:117px;top:0;width:1px;height:29px;background:#707070"></div>
<div class="a" style="left:205px;top:0;width:1px;height:29px;background:#707070"></div>
<div class="a" style="left:317px;top:0;width:1px;height:29px;background:#707070"></div>
<div class="a" style="left:429px;top:0;width:1px;height:29px;background:#707070"></div>
<div class="a" style="left:0;top:28px;width:430px;height:1px;background:#707070"></div>
<div class="t" style="left:35px;top:9px;font-size:10.5px;color:#1a8ad4">123</div>
<div class="t" style="left:55px;top:8px;font-size:12.5px"><span class="cw">年</span><span class="cw">份</span></div>
<svg style="left:102px;top:11px" width="10" height="6"><path d="M0 0H10L5 5.5Z" fill="#1a8ad4"/></svg>
<div class="t" style="left:123px;top:10px;font-size:9px;font-weight:bold;color:#1a8ad4">ABC</div>
<div class="t" style="left:144px;top:8px;font-size:12.5px"><span class="cw">时</span><span class="cw">间</span></div>
<svg style="left:190px;top:11px" width="10" height="6"><path d="M0 0H10L5 5.5Z" fill="#1a8ad4"/></svg>
<div class="t" style="left:211px;top:9px;font-size:10.5px;color:#1a8ad4">123</div>
<div class="t" style="left:231px;top:8px;font-size:12.5px"><span class="cw">销</span><span class="cw">售</span><span class="cw">金</span><span class="cw">额</span></div>
<svg style="left:302px;top:11px" width="10" height="6"><path d="M0 0H10L5 5.5Z" fill="#1a8ad4"/></svg>
<div class="t" style="left:323px;top:9px;font-size:10.5px;color:#1a8ad4">123</div>
<div class="t" style="left:343px;top:8px;font-size:12.5px"><span class="cw">订</span><span class="cw">单</span><span class="cw">数</span><span class="cw">量</span></div>
<svg style="left:414px;top:11px" width="10" height="6"><path d="M0 0H10L5 5.5Z" fill="#1a8ad4"/></svg>
<svg style="left:5px;top:3px" width="7" height="9"><path d="M1.5 4V2.8A2 2 0 0 1 5.5 2.8V4" stroke="#f0b800" stroke-width="1.2" fill="none"/><rect x="0" y="3.8" width="7" height="5" rx="0.8" fill="#f7b900"/></svg>
</div>
<!-- grid vscroll -->
<div class="a" style="left:1558px;top:518px;width:15px;height:283px;background:#f3f3f3"></div>
<div class="a" style="left:1559px;top:535px;width:13px;height:32px;background:#c9cdc9"></div>
<svg style="left:1561px;top:524px" width="9" height="6"><path d="M0.8 5L4.5 1.5L8.2 5" stroke="#444" stroke-width="1.6" fill="none"/></svg>
<svg style="left:1561px;top:790px" width="9" height="6"><path d="M0.8 1L4.5 4.5L8.2 1" stroke="#444" stroke-width="1.6" fill="none"/></svg>
<!-- right panel icons -->
<svg style="left:1579px;top:527px" width="15" height="15"><rect x="0.6" y="0.6" width="13.8" height="13.8" fill="none" stroke="#1a8ad4" stroke-width="1.2"/><rect x="7" y="1" width="7" height="13" fill="#5ec3f0"/><path d="M0.6 5H14.4" stroke="#1a8ad4" stroke-width="1.2"/><circle cx="3" cy="12" r="2.5" fill="#1a8ad4"/></svg>
<div class="t" style="left:1594px;top:543px;transform:rotate(90deg);transform-origin:0 0;font-size:12.5px"><span class="cw">面</span><span class="cw">板</span></div>
<svg style="left:1578px;top:585px" width="15" height="14"><rect x="0.6" y="0.6" width="13.8" height="12.8" fill="#fff" stroke="#1a8ad4" stroke-width="1.2"/><path d="M0.6 3H14.4" stroke="#1a8ad4" stroke-width="1.5"/><rect x="1.5" y="4" width="1.2" height="1.2" fill="#1a8ad4"/><rect x="1.5" y="8" width="1.2" height="1.2" fill="#1a8ad4"/><rect x="3.5" y="6" width="1.2" height="1.2" fill="#1a8ad4"/><rect x="3.5" y="10" width="1.2" height="1.2" fill="#1a8ad4"/><rect x="5.5" y="4" width="1.2" height="1.2" fill="#1a8ad4"/><rect x="5.5" y="8" width="1.2" height="1.2" fill="#1a8ad4"/><rect x="7.5" y="6" width="1.2" height="1.2" fill="#1a8ad4"/><rect x="7.5" y="10" width="1.2" height="1.2" fill="#1a8ad4"/><rect x="9.5" y="4" width="1.2" height="1.2" fill="#1a8ad4"/><rect x="9.5" y="8" width="1.2" height="1.2" fill="#1a8ad4"/><rect x="11.5" y="6" width="1.2" height="1.2" fill="#1a8ad4"/><rect x="11.5" y="10" width="1.2" height="1.2" fill="#1a8ad4"/></svg>
<svg style="left:1577px;top:606px" width="15" height="15"><circle cx="7.5" cy="7.5" r="6.7" fill="none" stroke="#1a8ad4" stroke-width="1.2"/><circle cx="5.5" cy="5.5" r="1.1" fill="#1a8ad4"/><circle cx="9.5" cy="5.5" r="1.1" fill="#1a8ad4"/><circle cx="5.5" cy="9.5" r="1.1" fill="#1a8ad4"/><circle cx="9.5" cy="9.5" r="1.1" fill="#1a8ad4"/></svg>
<svg style="left:1577px;top:628px" width="15" height="16"><path d="M1 5H14V15H1ZM1 9H14M1 12H14M5 5V15M10 5V15" stroke="#1a8ad4" stroke-width="1.1" fill="none"/><path d="M7.5 0V5" stroke="#f08020" stroke-width="1.5"/><rect x="5" y="5" width="5" height="10" fill="#f59a3a" opacity="0.8"/></svg>
<svg style="left:1577px;top:650px" width="15" height="15"><rect x="0.6" y="0.6" width="13.8" height="13.8" fill="none" stroke="#1a8ad4" stroke-width="1.2"/><rect x="0.6" y="0.6" width="13.8" height="3" fill="#1a8ad4"/><rect x="2" y="5" width="6" height="5" fill="#5ec3f0"/><path d="M9 11.5H14M9 10V13M14 10V13" stroke="#1a8ad4" stroke-width="1"/></svg>
<svg style="left:1578px;top:671px" width="15" height="15"><circle cx="3.5" cy="3.5" r="3.2" fill="#1a8ad4"/><circle cx="11.5" cy="3.5" r="3.2" fill="#1a8ad4"/><circle cx="3.5" cy="11.5" r="3.2" fill="#1a8ad4"/><circle cx="11.5" cy="11.5" r="3.2" fill="#f59a20"/><path d="M2 3.5H5M10 3.5H13M11.5 2V5M2.2 10.2L4.8 12.8M4.8 10.2L2.2 12.8M10 10.8H13M10 12.2H13" stroke="#fff" stroke-width="0.9"/></svg>

<!-- results bottom toolbar -->
<svg style="left:60px;top:809px" width="14" height="15"><path d="M3 4A5 5 0 0 1 11.5 4.5M11 10.5A5 5 0 0 1 2.5 10" stroke="#1a8ad4" stroke-width="1.6" fill="none"/><path d="M10 1L13 5L9 6ZM4 14L1 10L5 9Z" fill="#1a8ad4"/><path d="M5 6L9 9" stroke="#1a8ad4" stroke-width="1.2"/></svg>
<div class="t" style="left:79px;top:811px;font-size:12.5px"><span class="cw">刷</span><span class="cw">新</span></div>
<svg style="left:117px;top:817px" width="8" height="5"><path d="M0 0H8L4.0 4.5Z" fill="#222"/></svg>
<div class="a" style="left:135px;top:809px;width:2px;height:2px;background:#c2b89f"></div><div class="a" style="left:135px;top:813px;width:2px;height:2px;background:#c2b89f"></div><div class="a" style="left:135px;top:817px;width:2px;height:2px;background:#c2b89f"></div><div class="a" style="left:135px;top:821px;width:2px;height:2px;background:#c2b89f"></div>
<svg style="left:146px;top:809px" width="14" height="14"><circle cx="7" cy="7" r="6.2" fill="none" stroke="#a0a0a0" stroke-width="1.2"/><path d="M4 7.2L6.2 9.5L10.2 4.8" stroke="#a0a0a0" stroke-width="1.2" fill="none"/></svg>
<div class="t" style="left:166px;top:811px;font-size:12.5px;color:#a0a0a0"><span class="cw">保</span><span class="cw">存</span></div>
<svg style="left:204px;top:817px" width="8" height="5"><path d="M0 0H8L4.0 4.5Z" fill="#888"/></svg>
<svg style="left:221px;top:810px" width="13" height="13"><rect x="0.6" y="0.6" width="11.8" height="11.8" fill="none" stroke="#a0a0a0" stroke-width="1.1"/><path d="M3 3L10 10M10 3L3 10" stroke="#a0a0a0" stroke-width="1"/></svg>
<div class="t" style="left:239px;top:811px;font-size:12.5px;color:#a0a0a0"><span class="cw">取</span><span class="cw">消</span></div>
<div class="sep" style="left:273px;top:804px;height:26px;background:#888"></div>
<svg style="left:283px;top:811px" width="16" height="14"><path d="M0 1H14M0 5H11M0 9H8M0 13H5" stroke="#1a8ad4" stroke-width="1.7"/><path d="M8 13L14 7" stroke="#1a8ad4" stroke-width="2.2"/></svg>
<svg style="left:307px;top:811px" width="16" height="14"><path d="M0 1H14M0 5H7M0 9H5M0 13H7M8 9H16M12 5V13" stroke="#a0a0a0" stroke-width="1.7"/></svg>
<svg style="left:332px;top:811px" width="15" height="14"><path d="M0 1H14M0 6H2M0 11H2" stroke="#a0a0a0" stroke-width="1.7"/><path d="M5 3C3 5 3 11 5 13M12 3C14 5 14 11 12 13M6 8H11M8.5 5.5V10.5" stroke="#a0a0a0" stroke-width="1.2" fill="none"/></svg>
<svg style="left:356px;top:811px" width="16" height="14"><path d="M0 1H14M0 6H14M0 11H5M7 11H16" stroke="#a0a0a0" stroke-width="1.7"/></svg>
<div class="a" style="left:380px;top:810px;width:2px;height:2px;background:#c2b89f"></div><div class="a" style="left:380px;top:814px;width:2px;height:2px;background:#c2b89f"></div><div class="a" style="left:380px;top:818px;width:2px;height:2px;background:#c2b89f"></div><div class="a" style="left:380px;top:822px;width:2px;height:2px;background:#c2b89f"></div>
<svg style="left:388px;top:810px" width="12" height="15"><path d="M1 0V15" stroke="#a0a0a0" stroke-width="1.8"/><path d="M10 1L4.5 7.5L10 14" stroke="#a0a0a0" stroke-width="1.8" fill="none"/></svg>
<svg style="left:413px;top:810px" width="8" height="15"><path d="M7 1L1.5 7.5L7 14" stroke="#a0a0a0" stroke-width="1.8" fill="none"/></svg>
<svg style="left:437px;top:810px" width="8" height="15"><path d="M1 1L6.5 7.5L1 14" stroke="#1a8ad4" stroke-width="1.8" fill="none"/></svg>
<svg style="left:457px;top:810px" width="13" height="15"><path d="M12 0V15" stroke="#1a8ad4" stroke-width="1.8"/><path d="M1 1L6.5 7.5L1 14" stroke="#1a8ad4" stroke-width="1.8" fill="none"/></svg>
<svg style="left:479px;top:810px" width="14" height="14"><path d="M0.6 3.5V0.6H3.5M10.5 0.6H13.4V3.5M13.4 10.5V13.4H10.5M3.5 13.4H0.6V10.5" stroke="#a0a0a0" stroke-width="1.1" fill="none"/><path d="M4.5 3.5H8L9.5 5V10.5H4.5Z" stroke="#a0a0a0" stroke-width="1" fill="none"/></svg>
<div class="a" style="left:503px;top:810px;width:2px;height:2px;background:#c2b89f"></div><div class="a" style="left:503px;top:814px;width:2px;height:2px;background:#c2b89f"></div><div class="a" style="left:503px;top:818px;width:2px;height:2px;background:#c2b89f"></div><div class="a" style="left:503px;top:822px;width:2px;height:2px;background:#c2b89f"></div>
<svg style="left:517px;top:810px" width="14" height="14"><path d="M7 12V1M3 5L7 1L11 5M0.8 8V13.2H13.2V8" stroke="#1a8ad4" stroke-width="1.6" fill="none"/></svg>
<div class="t" style="left:536px;top:811px;font-size:12.5px"><span class="cw">导</span><span class="cw">出</span><span class="cw">数</span><span class="cw">据</span>...</div>
<svg style="left:607px;top:817px" width="8" height="5"><path d="M0 0H8L4.0 4.5Z" fill="#222"/></svg>
<div class="a" style="left:625px;top:810px;width:2px;height:2px;background:#c2b89f"></div><div class="a" style="left:625px;top:814px;width:2px;height:2px;background:#c2b89f"></div><div class="a" style="left:625px;top:818px;width:2px;height:2px;background:#c2b89f"></div><div class="a" style="left:625px;top:822px;width:2px;height:2px;background:#c2b89f"></div>
<svg style="left:632px;top:809px" width="15" height="15"><path d="M7.14 0.11L8.59 0.18L9.39 2.23L10.38 2.70L12.47 2.02L13.44 3.09L12.56 5.11L12.93 6.14L14.89 7.14L14.82 8.59L12.77 9.39L12.30 10.38L12.98 12.47L11.91 13.44L9.89 12.56L8.86 12.93L7.86 14.89L6.41 14.82L5.61 12.77L4.62 12.30L2.53 12.98L1.56 11.91L2.44 9.89L2.07 8.86L0.11 7.86L0.18 6.41L2.23 5.61L2.70 4.62L2.02 2.53L3.09 1.56L5.11 2.44L6.14 2.07Z" fill="#1a8ad4"/><circle cx="7.5" cy="7.5" r="5.6" fill="#1a8ad4"/><path d="M7.5 4.5L10.5 7.5L7.5 10.5L4.5 7.5Z" fill="#8fd0f5"/></svg>
<div class="a" style="left:654px;top:806px;width:54px;height:23px;background:#fff;border:1px solid #555"></div>
<div class="t" style="left:658px;top:811px;font-size:12.5px">200</div>
<svg style="left:715px;top:809px" width="15" height="15"><path d="M1 1L7.5 7M14 1L7.5 7V11M5 9L7.5 11.5L10 9M0.8 9V14H14.2V9" stroke="#1a8ad4" stroke-width="1.4" fill="none"/></svg>
<div class="t" style="left:737px;top:811px;font-size:12.5px">96</div>
<div class="a" style="left:759px;top:810px;width:2px;height:2px;background:#c2b89f"></div><div class="a" style="left:759px;top:814px;width:2px;height:2px;background:#c2b89f"></div><div class="a" style="left:759px;top:818px;width:2px;height:2px;background:#c2b89f"></div><div class="a" style="left:759px;top:822px;width:2px;height:2px;background:#c2b89f"></div>
<div class="t" style="left:788px;top:810px;font-size:11px;color:#555">···</div>
<div class="t" style="left:805px;top:811px;font-size:12.5px">96 <span class="cw">行</span><span class="cw">已</span><span class="cw">获</span><span class="cw">取</span> - 15.292s (1ms <span class="cw">获</span><span class="cw">取</span>), 2025-10-23 13:52:56</div>
<svg style="left:1577px;top:815px" width="16" height="16"><rect x="1" y="1.5" width="4.5" height="14" rx="1.5" fill="#1a8ad4"/><rect x="7" y="11" width="8" height="4.5" rx="1.2" fill="#1a8ad4"/><path d="M8 8.5A4 4 0 0 1 14.5 7.5V10" stroke="#1a8ad4" stroke-width="1.5" fill="none"/><path d="M6.8 6.5L9.5 3.5L10 8Z" fill="#1a8ad4"/></svg>
<!-- status bar -->
<div class="a" style="left:0;top:833px;width:1600px;height:27px;background:#f5f5f5;border-top:1px solid #dcdcdc"></div>
<div class="a" style="left:778px;top:836px;width:1px;height:21px;background:#cfcfcf"></div><div class="a" style="left:814px;top:836px;width:1px;height:21px;background:#cfcfcf"></div><div class="a" style="left:841px;top:836px;width:1px;height:21px;background:#cfcfcf"></div><div class="a" style="left:975px;top:836px;width:1px;height:21px;background:#cfcfcf"></div><div class="a" style="left:1101px;top:836px;width:1px;height:21px;background:#cfcfcf"></div><div class="a" style="left:1231px;top:836px;width:1px;height:21px;background:#cfcfcf"></div>
<div class="t" style="left:786px;top:839px;font-size:12.5px">CST</div>
<div class="t" style="left:822px;top:839px;font-size:12.5px">zh</div>
<div class="t" style="left:849px;top:839px;font-size:12.5px"><span class="cw">可</span><span class="cw">写</span></div>
<div class="t" style="left:983px;top:839px;font-size:12.5px"><span class="cw">智</span><span class="cw">能</span><span class="cw">插</span><span class="cw">入</span></div>
<div class="t" style="left:1111px;top:839px;font-size:12.5px">983 : 11 : 27727</div>
<div class="t" style="left:1239px;top:839px;font-size:12.5px">Sel: 0 | 0</div>
<div class="a" style="left:1315px;top:839px;width:2px;height:2px;background:#c8bea0"></div><div class="a" style="left:1315px;top:843px;width:2px;height:2px;background:#c8bea0"></div><div class="a" style="left:1315px;top:847px;width:2px;height:2px;background:#c8bea0"></div><div class="a" style="left:1315px;top:851px;width:2px;height:2px;background:#c8bea0"></div>
<!-- taskbar -->
<div class="a" style="left:0;top:860px;width:1600px;height:40px;background:#000"></div>
<svg style="left:16px;top:872px" width="16" height="16"><path d="M0 2.2L6.5 1.3V7.5H0ZM7.5 1.1L16 0V7.5H7.5ZM0 8.5H6.5V14.7L0 13.8ZM7.5 8.5H16V16L7.5 14.9Z" fill="#fff"/></svg>
<svg style="left:64px;top:872px" width="17" height="17"><circle cx="10.5" cy="6.5" r="5.5" fill="none" stroke="#fff" stroke-width="1.3"/><path d="M6.5 10.5L0.8 16.2" stroke="#fff" stroke-width="1.5"/></svg>
<svg style="left:112px;top:872px" width="17" height="16"><path d="M0 1.5H11M0 14.5H11M1.5 4.5H10V11.5H1.5ZM14 0V16" stroke="#fff" stroke-width="1.3" fill="none"/><rect x="13" y="4" width="2.5" height="2.5" fill="#fff"/></svg>
<svg style="left:160px;top:868px" width="23" height="23"><ellipse cx="11.5" cy="11.5" rx="11" ry="6" transform="rotate(-35 11.5 11.5)" fill="none" stroke="#f5c518" stroke-width="1.8"/><circle cx="11.5" cy="12" r="7.5" fill="#1eb4f0"/><path d="M5.5 12H17.5C17.5 8 15 5.5 11.5 5.5C8 5.5 5 8.5 5 12C5 15.5 8 18.5 11.5 18.5C14 18.5 16 17.5 17 15.5" stroke="#fff" stroke-width="2.4" fill="none"/></svg>
<svg style="left:209px;top:870px" width="22" height="20"><path d="M0 2H8L10 4H22V19H0Z" fill="#f8d775"/><path d="M0 6H22V19H0Z" fill="#ffe38a"/><path d="M5 19V12H17V19H14V15H8V19Z" fill="#1e9be8"/></svg>
<svg style="left:257px;top:868px" width="24" height="24" viewBox="0 0 24 24"><circle cx="12" cy="12" r="10.9" fill="#fff" stroke="#42bfc1" stroke-width="1.9"/><path d="M7 21.5L8.8 15.5Q12 13.8 14 16L15.8 14.8L16.6 11.5L17.6 15.5L17 18.5L15 21.8Z" fill="#3a2e28"/><ellipse cx="16.3" cy="8" rx="2" ry="1.1" fill="#3a2e28"/><circle cx="10.6" cy="7.3" r="0.8" fill="#3a2e28"/><path d="M5.5 11.5Q7.5 5 12 4.2Q14.5 4 16 4.8" stroke="#666" stroke-width="0.9" fill="none"/><path d="M6 8.5L4.8 15L6.5 13.5Z" fill="#3a2e28"/></svg>
<div class="a" style="left:294px;top:860px;width:46px;height:40px;background:#2b2b2b"></div>
<div class="a" style="left:294px;top:898px;width:46px;height:2px;background:#76b9ed"></div>
<div class="a" style="left:339px;top:860px;width:2px;height:38px;background:#3a3a3a"></div>
<svg style="left:306px;top:868px" width="24" height="24" viewBox="0 0 24 24"><circle cx="12" cy="12" r="10.9" fill="#fff" stroke="#42bfc1" stroke-width="1.9"/><path d="M7 21.5L8.8 15.5Q12 13.8 14 16L15.8 14.8L16.6 11.5L17.6 15.5L17 18.5L15 21.8Z" fill="#3a2e28"/><ellipse cx="16.3" cy="8" rx="2" ry="1.1" fill="#3a2e28"/><circle cx="10.6" cy="7.3" r="0.8" fill="#3a2e28"/><path d="M5.5 11.5Q7.5 5 12 4.2Q14.5 4 16 4.8" stroke="#666" stroke-width="0.9" fill="none"/><path d="M6 8.5L4.8 15L6.5 13.5Z" fill="#3a2e28"/></svg>
<svg style="left:1348px;top:876px" width="13" height="8"><path d="M0.7 7L6.5 1L12.3 7" stroke="#fff" stroke-width="1.2" fill="none"/></svg>
<svg style="left:1372px;top:872px" width="15" height="17"><path d="M1.5 4.5H7.5V16H1.5ZM2.5 0.5H6.5V4.5H2.5Z" stroke="#fff" stroke-width="1" fill="none"/><path d="M8 14L10 16L14 12" stroke="#aaa" stroke-width="1" fill="none"/></svg>
<svg style="left:1394px;top:874px" width="17" height="14"><path d="M4 2.5H16V10H4ZM10 10V13M6 13H14M0.5 2.5V13.5" stroke="#fff" stroke-width="1" fill="none"/><rect x="0.5" y="0.5" width="3.5" height="4" fill="none" stroke="#fff" stroke-width="1"/></svg>
<svg style="left:1418px;top:875px" width="17" height="12"><path d="M0.5 4H3L7 0.5V11.5L3 8H0.5Z" stroke="#fff" stroke-width="1" fill="none"/><path d="M9 3.5C10 5 10 7 9 8.5M11.5 2C13.2 4.5 13.2 7.5 11.5 10M14 0.8C16.5 4 16.5 8 14 11.2" stroke="#fff" stroke-width="1" fill="none"/></svg>
<div class="t" style="left:1443px;top:874px;font-size:12.5px;color:#fff">ENG</div>
<div class="t" style="left:1495px;top:865px;font-size:12.5px;color:#fff">13:53</div>
<div class="t" style="left:1477px;top:884px;font-size:12.5px;color:#fff">2025/10/23</div>
<svg style="left:1560px;top:872px" width="16" height="16"><path d="M0.5 0.5H15.5V12.5H10L8 15L6 12.5H0.5Z" stroke="#fff" stroke-width="1" fill="none"/></svg>
<div class="a" style="left:1596px;top:860px;width:1px;height:40px;background:#555"></div>
<div class="a" style="left:74px;top:209.0px;transform:rotate(-45deg);transform-origin:0 0;white-space:pre;font-size:18px;line-height:21px;color:rgba(0,0,0,0.12);pointer-events:none"><div style="letter-spacing:1.9px">audit<span class="cw">审</span><span class="cw">计</span>03(Audit3)</div><div style="letter-spacing:1.2px">audit-172.18.210.237</div></div>
<div class="a" style="left:374px;top:209.0px;transform:rotate(-45deg);transform-origin:0 0;white-space:pre;font-size:18px;line-height:21px;color:rgba(0,0,0,0.12);pointer-events:none"><div style="letter-spacing:1.9px">audit<span class="cw">审</span><span class="cw">计</span>03(Audit3)</div><div style="letter-spacing:1.2px">audit-172.18.210.237</div></div>
<div class="a" style="left:674px;top:209.0px;transform:rotate(-45deg);transform-origin:0 0;white-space:pre;font-size:18px;line-height:21px;color:rgba(0,0,0,0.12);pointer-events:none"><div style="letter-spacing:1.9px">audit<span class="cw">审</span><span class="cw">计</span>03(Audit3)</div><div style="letter-spacing:1.2px">audit-172.18.210.237</div></div>
<div class="a" style="left:974px;top:209.0px;transform:rotate(-45deg);transform-origin:0 0;white-space:pre;font-size:18px;line-height:21px;color:rgba(0,0,0,0.12);pointer-events:none"><div style="letter-spacing:1.9px">audit<span class="cw">审</span><span class="cw">计</span>03(Audit3)</div><div style="letter-spacing:1.2px">audit-172.18.210.237</div></div>
<div class="a" style="left:1274px;top:209.0px;transform:rotate(-45deg);transform-origin:0 0;white-space:pre;font-size:18px;line-height:21px;color:rgba(0,0,0,0.12);pointer-events:none"><div style="letter-spacing:1.9px">audit<span class="cw">审</span><span class="cw">计</span>03(Audit3)</div><div style="letter-spacing:1.2px">audit-172.18.210.237</div></div>
<div class="a" style="left:1574px;top:209.0px;transform:rotate(-45deg);transform-origin:0 0;white-space:pre;font-size:18px;line-height:21px;color:rgba(0,0,0,0.12);pointer-events:none"><div style="letter-spacing:1.9px">audit<span class="cw">审</span><span class="cw">计</span>03(Audit3)</div><div style="letter-spacing:1.2px">audit-172.18.210.237</div></div>
<div class="a" style="left:75px;top:509.5px;transform:rotate(-45deg);transform-origin:0 0;white-space:pre;font-size:18px;line-height:21px;color:rgba(0,0,0,0.12);pointer-events:none"><div style="letter-spacing:1.9px">audit<span class="cw">审</span><span class="cw">计</span>03(Audit3)</div><div style="letter-spacing:1.2px">audit-172.18.210.237</div></div>
<div class="a" style="left:375px;top:509.5px;transform:rotate(-45deg);transform-origin:0 0;white-space:pre;font-size:18px;line-height:21px;color:rgba(0,0,0,0.12);pointer-events:none"><div style="letter-spacing:1.9px">audit<span class="cw">审</span><span class="cw">计</span>03(Audit3)</div><div style="letter-spacing:1.2px">audit-172.18.210.237</div></div>
<div class="a" style="left:675px;top:509.5px;transform:rotate(-45deg);transform-origin:0 0;white-space:pre;font-size:18px;line-height:21px;color:rgba(0,0,0,0.12);pointer-events:none"><div style="letter-spacing:1.9px">audit<span class="cw">审</span><span class="cw">计</span>03(Audit3)</div><div style="letter-spacing:1.2px">audit-172.18.210.237</div></div>
<div class="a" style="left:975px;top:509.5px;transform:rotate(-45deg);transform-origin:0 0;white-space:pre;font-size:18px;line-height:21px;color:rgba(0,0,0,0.12);pointer-events:none"><div style="letter-spacing:1.9px">audit<span class="cw">审</span><span class="cw">计</span>03(Audit3)</div><div style="letter-spacing:1.2px">audit-172.18.210.237</div></div>
<div class="a" style="left:1275px;top:509.5px;transform:rotate(-45deg);transform-origin:0 0;white-space:pre;font-size:18px;line-height:21px;color:rgba(0,0,0,0.12);pointer-events:none"><div style="letter-spacing:1.9px">audit<span class="cw">审</span><span class="cw">计</span>03(Audit3)</div><div style="letter-spacing:1.2px">audit-172.18.210.237</div></div>
<div class="a" style="left:1575px;top:509.5px;transform:rotate(-45deg);transform-origin:0 0;white-space:pre;font-size:18px;line-height:21px;color:rgba(0,0,0,0.12);pointer-events:none"><div style="letter-spacing:1.9px">audit<span class="cw">审</span><span class="cw">计</span>03(Audit3)</div><div style="letter-spacing:1.2px">audit-172.18.210.237</div></div>
<div class="a" style="left:76px;top:810.0px;transform:rotate(-45deg);transform-origin:0 0;white-space:pre;font-size:18px;line-height:21px;color:rgba(0,0,0,0.12);pointer-events:none"><div style="letter-spacing:1.9px">audit<span class="cw">审</span><span class="cw">计</span>03(Audit3)</div><div style="letter-spacing:1.2px">audit-172.18.210.237</div></div>
<div class="a" style="left:376px;top:810.0px;transform:rotate(-45deg);transform-origin:0 0;white-space:pre;font-size:18px;line-height:21px;color:rgba(0,0,0,0.12);pointer-events:none"><div style="letter-spacing:1.9px">audit<span class="cw">审</span><span class="cw">计</span>03(Audit3)</div><div style="letter-spacing:1.2px">audit-172.18.210.237</div></div>
<div class="a" style="left:676px;top:810.0px;transform:rotate(-45deg);transform-origin:0 0;white-space:pre;font-size:18px;line-height:21px;color:rgba(0,0,0,0.12);pointer-events:none"><div style="letter-spacing:1.9px">audit<span class="cw">审</span><span class="cw">计</span>03(Audit3)</div><div style="letter-spacing:1.2px">audit-172.18.210.237</div></div>
<div class="a" style="left:976px;top:810.0px;transform:rotate(-45deg);transform-origin:0 0;white-space:pre;font-size:18px;line-height:21px;color:rgba(0,0,0,0.12);pointer-events:none"><div style="letter-spacing:1.9px">audit<span class="cw">审</span><span class="cw">计</span>03(Audit3)</div><div style="letter-spacing:1.2px">audit-172.18.210.237</div></div>
<div class="a" style="left:1276px;top:810.0px;transform:rotate(-45deg);transform-origin:0 0;white-space:pre;font-size:18px;line-height:21px;color:rgba(0,0,0,0.12);pointer-events:none"><div style="letter-spacing:1.9px">audit<span class="cw">审</span><span class="cw">计</span>03(Audit3)</div><div style="letter-spacing:1.2px">audit-172.18.210.237</div></div>
<div class="a" style="left:1576px;top:810.0px;transform:rotate(-45deg);transform-origin:0 0;white-space:pre;font-size:18px;line-height:21px;color:rgba(0,0,0,0.12);pointer-events:none"><div style="letter-spacing:1.9px">audit<span class="cw">审</span><span class="cw">计</span>03(Audit3)</div><div style="letter-spacing:1.2px">audit-172.18.210.237</div></div>
</body></html>
